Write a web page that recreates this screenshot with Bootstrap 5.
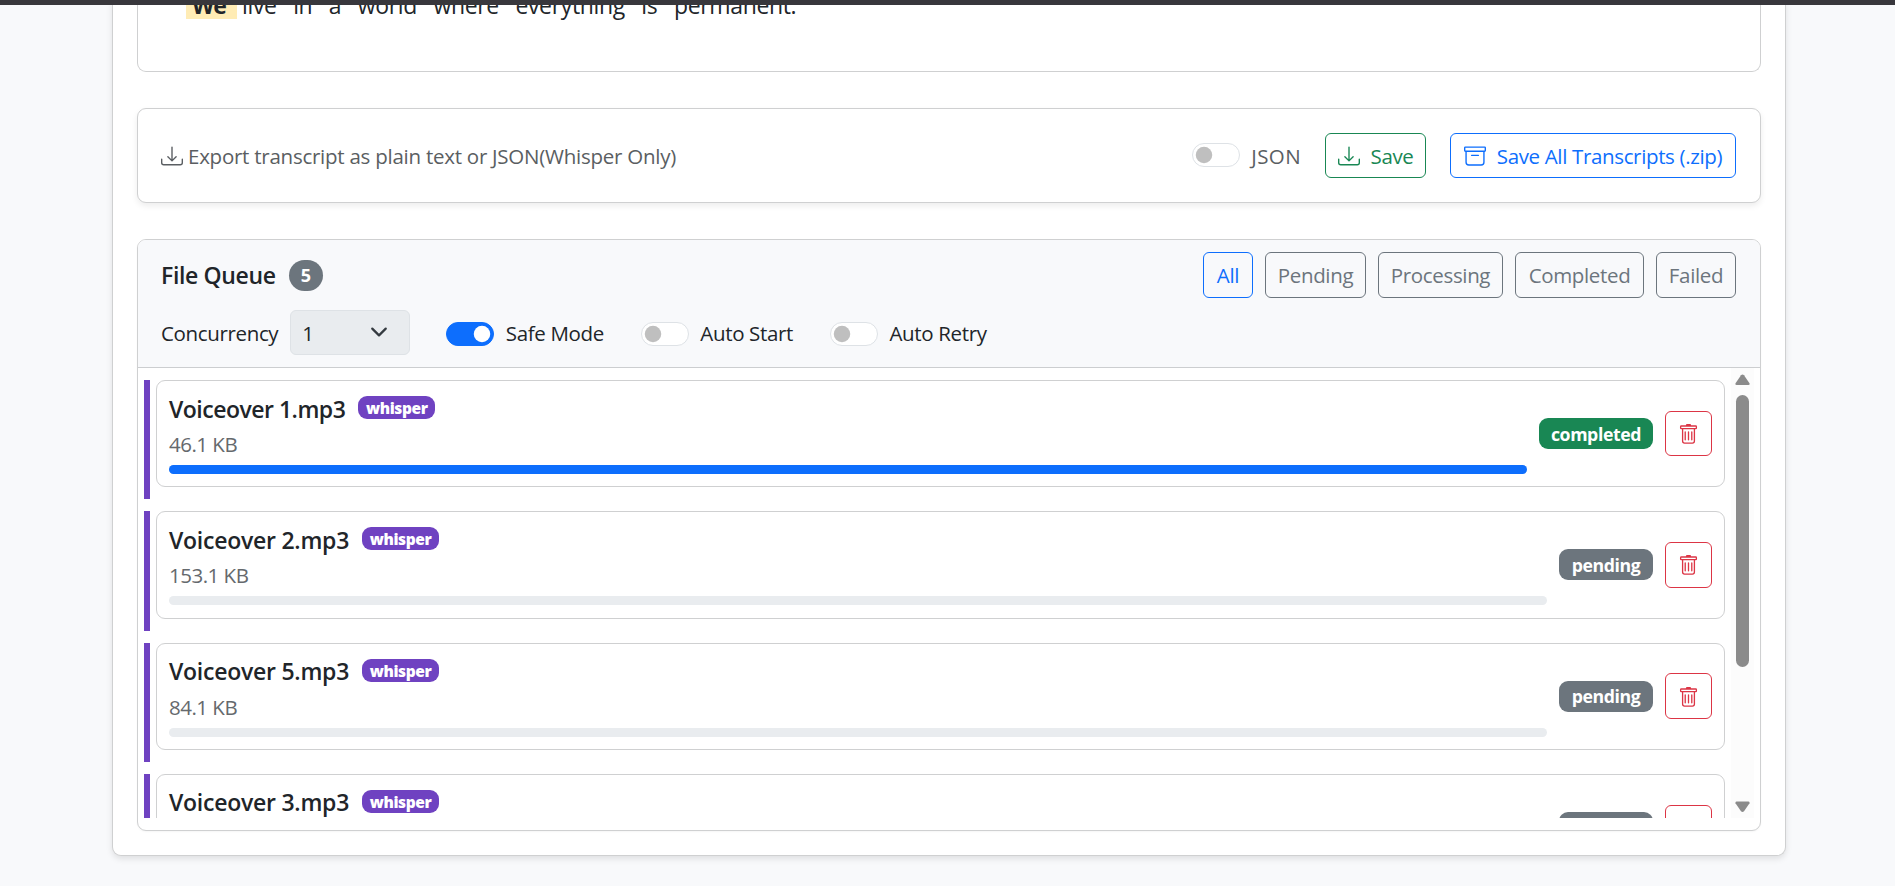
<!DOCTYPE html>
<html lang="en">
<head>
<meta charset="utf-8">
<meta name="viewport" content="width=device-width, initial-scale=1">
<title>Transcripts</title>
<link href="https://cdn.jsdelivr.net/npm/bootstrap@5.3.0/dist/css/bootstrap.min.css" rel="stylesheet">
<style>
html{font-size:24px}
body{font-family:"Open Sans","Noto Sans",sans-serif;background:#f8f9fb;overflow:hidden;height:886px;letter-spacing:-.35px}
.topstrip{height:5px;background:#38373c;z-index:1030}
.page,.transcript{border:1px solid #cfd0d1;border-top:0;border-radius:0 0 9px 9px}
.page{width:1674px;margin-left:112px;height:856px;padding:0 24px;box-shadow:0 3px 6px rgba(0,0,0,.1);display:flow-root}
.transcript{height:72px;padding:0 48px;display:flow-root}
.words{height:30px;line-height:32px;margin-top:-11px;font-size:23px;white-space:nowrap}
.words>*{margin-right:16.5px}
.words .now{background:#ffecb5;width:51px;padding-left:6px;margin:0 5px 0 0;letter-spacing:-1px;font-weight:700}
.panel{border-color:#cfd0d1;border-radius:9px}
.export{height:95px;margin-top:36px;padding:0 24px 0 23px;box-shadow:0 3px 6px rgba(0,0,0,.075)}
.export-text{letter-spacing:-.25px;margin:2px 0 0 -1px}
.export label{letter-spacing:.4px;padding-top:3px}
.files{height:592px;margin-top:36px;box-shadow:0 1px 2px rgba(0,0,0,.04)}
.txt-sm,.btn-sm{font-size:20.5px;line-height:31.5px;white-space:nowrap}
.btn-sm{padding:7px 0 5px;height:45.5px;border-radius:6px;display:flex;align-items:center;justify-content:center;letter-spacing:-.35px}
.btn-sm svg{margin:-2px 11px 0 0}
.w-save{width:101px;height:45px}.w-zip{width:286px;height:45px}
.w-all{width:50px}.w-pend{width:101px}.w-proc{width:125px}.w-comp{width:129px}.w-fail{width:80px}
.head{background:#f8f9fb;height:128px;padding:12px 24px 12px 23px;border-bottom:1px solid #ccced0;border-radius:8px 8px 0 0}
.filters{gap:12px}
.options{margin-top:12px}
.options>span,.options label{padding-top:3px}
.count{width:34px;height:31px;font-size:18px;line-height:19px;margin:1px 0 0 13px}
.form-check.form-switch{padding-left:0;min-height:0;margin:0;display:flex;align-items:center}
.form-switch .form-check-input{margin:4px 0 0;border-color:#dee2e6;width:48px;height:24px;flex:none;float:none}
.export .form-switch .form-check-input{margin-top:-1px}
.form-switch .form-check-input:checked{border-color:#0d6efd}
.options .form-switch{margin-right:37px}
.form-switch label{margin-left:11.5px}
.muted{color:#5a5e62}
.conc{width:120px;height:45px;margin:0 36px 0 12px;background-color:#e9ecef;border-color:#dee2e6;border-radius:6px;background-position:right 21px center;background-size:18px 18px;padding:2px 0 0 11px;font-size:20.5px}
.scroller{height:450px;padding:0 6px}
.queue{height:450px;overflow:hidden;padding-top:12px}
.item{border-left:6px solid #6f42c1;padding:0 6px 12px;height:119.25px;margin-bottom:12px}
.box{height:107.25px;padding:0 12px}
.name{font-size:23px;font-weight:600;line-height:36px}
.item .name{margin-top:-5px;letter-spacing:-.25px}
.item:first-child .name{letter-spacing:-.5px}
.title-line{height:36px}
.size{color:#65696d;letter-spacing:-.5px;height:31.5px;line-height:31px}
.eng{background:#6f42c1;font-size:15.5px;height:23px;line-height:24px;width:77px;text-align:center;border-radius:9px;font-weight:800;margin:-7px 0 0 13px;letter-spacing:-.4px}
.status{font-size:17.7px;line-height:18px;height:31px;padding-top:6.5px;border-radius:9px;letter-spacing:-.4px}
.completed{width:114px;background:#198754}.pending{width:94px;background:#6c757d}
.progress{height:9px;margin-top:4.5px;border-radius:5px;background:#e9ecef}
.bar-track{width:23px;height:450px;background:#fcfcfc;padding:6px 0 5px}
.thumb{width:13px;height:272px;border-radius:7px;background:#8b8b8b;margin-top:9px}
.del{width:47px}
.del svg{margin:0 1px 0 0}
svg{flex:none;display:block}
</style>
</head>
<body>
<svg width="0" height="0" class="position-absolute" aria-hidden="true">
  <symbol id="download" viewBox="0 0 16 16"><path d="M.5 9.9a.5.5 0 0 1 .5.5v2.5a1 1 0 0 0 1 1h12a1 1 0 0 0 1-1v-2.5a.5.5 0 0 1 1 0v2.5a2 2 0 0 1-2 2H2a2 2 0 0 1-2-2v-2.5a.5.5 0 0 1 .5-.5z"/><path d="M7.646 11.854a.5.5 0 0 0 .708 0l3-3a.5.5 0 0 0-.708-.708L8.5 10.293V1.5a.5.5 0 0 0-1 0v8.793L5.354 8.146a.5.5 0 1 0-.708.708l3 3z"/></symbol>
  <symbol id="archive" viewBox="0 0 16 16"><path d="M0 2a1 1 0 0 1 1-1h14a1 1 0 0 1 1 1v2a1 1 0 0 1-1 1v7.5a2.5 2.5 0 0 1-2.5 2.5h-9A2.5 2.5 0 0 1 1 12.5V5a1 1 0 0 1-1-1V2zm2 3v7.5A1.5 1.5 0 0 0 3.5 14h9a1.5 1.5 0 0 0 1.5-1.5V5H2zm13-3H1v2h14V2zM5 7.5a.5.5 0 0 1 .5-.5h5a.5.5 0 0 1 0 1h-5a.5.5 0 0 1-.5-.5z"/></symbol>
  <symbol id="trash" viewBox="0 0 16 16"><path d="M5.5 5.5A.5.5 0 0 1 6 6v6a.5.5 0 0 1-1 0V6a.5.5 0 0 1 .5-.5Zm2.5 0a.5.5 0 0 1 .5.5v6a.5.5 0 0 1-1 0V6a.5.5 0 0 1 .5-.5Zm3 .5a.5.5 0 0 0-1 0v6a.5.5 0 0 0 1 0V6Z"/><path d="M14.5 3a1 1 0 0 1-1 1H13v9a2 2 0 0 1-2 2H5a2 2 0 0 1-2-2V4h-.5a1 1 0 0 1-1-1V2a1 1 0 0 1 1-1H6a1 1 0 0 1 1-1h2a1 1 0 0 1 1 1h3.5a1 1 0 0 1 1 1v1ZM4.118 4 4 4.059V13a1 1 0 0 0 1 1h6a1 1 0 0 0 1-1V4.059L11.882 4H4.118ZM2.5 3h11V2h-11v1Z"/></symbol>
</svg>
<div class="topstrip fixed-top"></div>
<main class="page bg-white">
  <section class="transcript">
    <div class="words d-flex"><span class="now">We</span><span>live</span><span>in</span><span>a</span><span>world</span><span>where</span><span>everything</span><span>is</span><span>permanent.</span></div>
  </section>

  <section class="card panel export flex-row align-items-center txt-sm">
    <svg class="me-1 muted" width="22" height="22" fill="currentColor"><use href="#download"/></svg>
    <span class="muted export-text">Export transcript as plain text or JSON(Whisper Only)</span>
    <div class="form-check form-switch ms-auto me-3"><input class="form-check-input" type="checkbox" id="json"><label class="muted" for="json">JSON</label></div>
    <button class="btn btn-sm btn-outline-success w-save me-3"><svg width="22" height="22" fill="currentColor"><use href="#download"/></svg>Save</button>
    <button class="btn btn-sm btn-outline-primary w-zip"><svg width="22" height="22" fill="currentColor"><use href="#archive"/></svg>Save All Transcripts (.zip)</button>
  </section>

  <section class="card panel files">
    <div class="head">
      <div class="d-flex align-items-center">
        <span class="name">File Queue</span><span class="badge rounded-pill text-bg-secondary count">5</span>
        <div class="d-flex filters ms-auto">
          <button class="btn btn-sm btn-outline-primary w-all">All</button>
          <button class="btn btn-sm btn-outline-secondary w-pend">Pending</button>
          <button class="btn btn-sm btn-outline-secondary w-proc">Processing</button>
          <button class="btn btn-sm btn-outline-secondary w-comp">Completed</button>
          <button class="btn btn-sm btn-outline-secondary w-fail">Failed</button>
        </div>
      </div>
      <div class="d-flex align-items-center txt-sm options">
        <span>Concurrency</span>
        <select class="form-select conc"><option>1</option></select>
        <div class="form-check form-switch"><input class="form-check-input" type="checkbox" id="safe" checked><label for="safe">Safe Mode</label></div>
        <div class="form-check form-switch"><input class="form-check-input" type="checkbox" id="start"><label for="start">Auto Start</label></div>
        <div class="form-check form-switch"><input class="form-check-input" type="checkbox" id="retry"><label for="retry">Auto Retry</label></div>
      </div>
    </div>
    <div class="scroller d-flex">
      <div class="queue flex-grow-1" id="queue"></div>
      <div class="bar-track d-flex flex-column align-items-center">
        <svg width="15" height="12" fill="#8b8b8b"><path d="M6 1.2Q7.5-.4 9 1.2L14.5 9.2Q15 11 13.5 11H1.5Q0 11 .5 9.2Z"/></svg>
        <div class="thumb"></div>
        <svg class="mt-auto" width="15" height="12" fill="#8b8b8b"><path d="M6 10.3Q7.5 11.9 9 10.3L14.5 2.3Q15 .5 13.5 .5H1.5Q0 .5 .5 2.3Z"/></svg>
      </div>
    </div>
  </section>
</main>
<script>
const files = [
  ['Voiceover 1.mp3', '46.1 KB', 'completed', 100],
  ['Voiceover 2.mp3', '153.1 KB', 'pending', 0],
  ['Voiceover 5.mp3', '84.1 KB', 'pending', 0],
  ['Voiceover 3.mp3', '', 'pending', 0]
];
document.getElementById('queue').innerHTML = files.map(([name, size, status, pct]) => `
  <div class="item"><div class="card panel box flex-row align-items-center">
    <div class="flex-grow-1">
      <div class="d-flex align-items-center title-line"><span class="name">${name}</span><span class="eng text-white">whisper</span></div>
      <div class="size txt-sm">${size}</div>
      <div class="progress"><div class="progress-bar" style="width:${pct}%"></div></div>
    </div>
    <span class="badge status ${status} mx-2 px-0">${status}</span>
    <button class="btn btn-sm btn-outline-danger del" aria-label="Delete"><svg width="21" height="21" fill="currentColor"><use href="#trash"/></svg></button>
  </div></div>`).join('');
</script>
<script src="https://cdn.jsdelivr.net/npm/bootstrap@5.3.0/dist/js/bootstrap.bundle.min.js"></script>
</body>
</html>
